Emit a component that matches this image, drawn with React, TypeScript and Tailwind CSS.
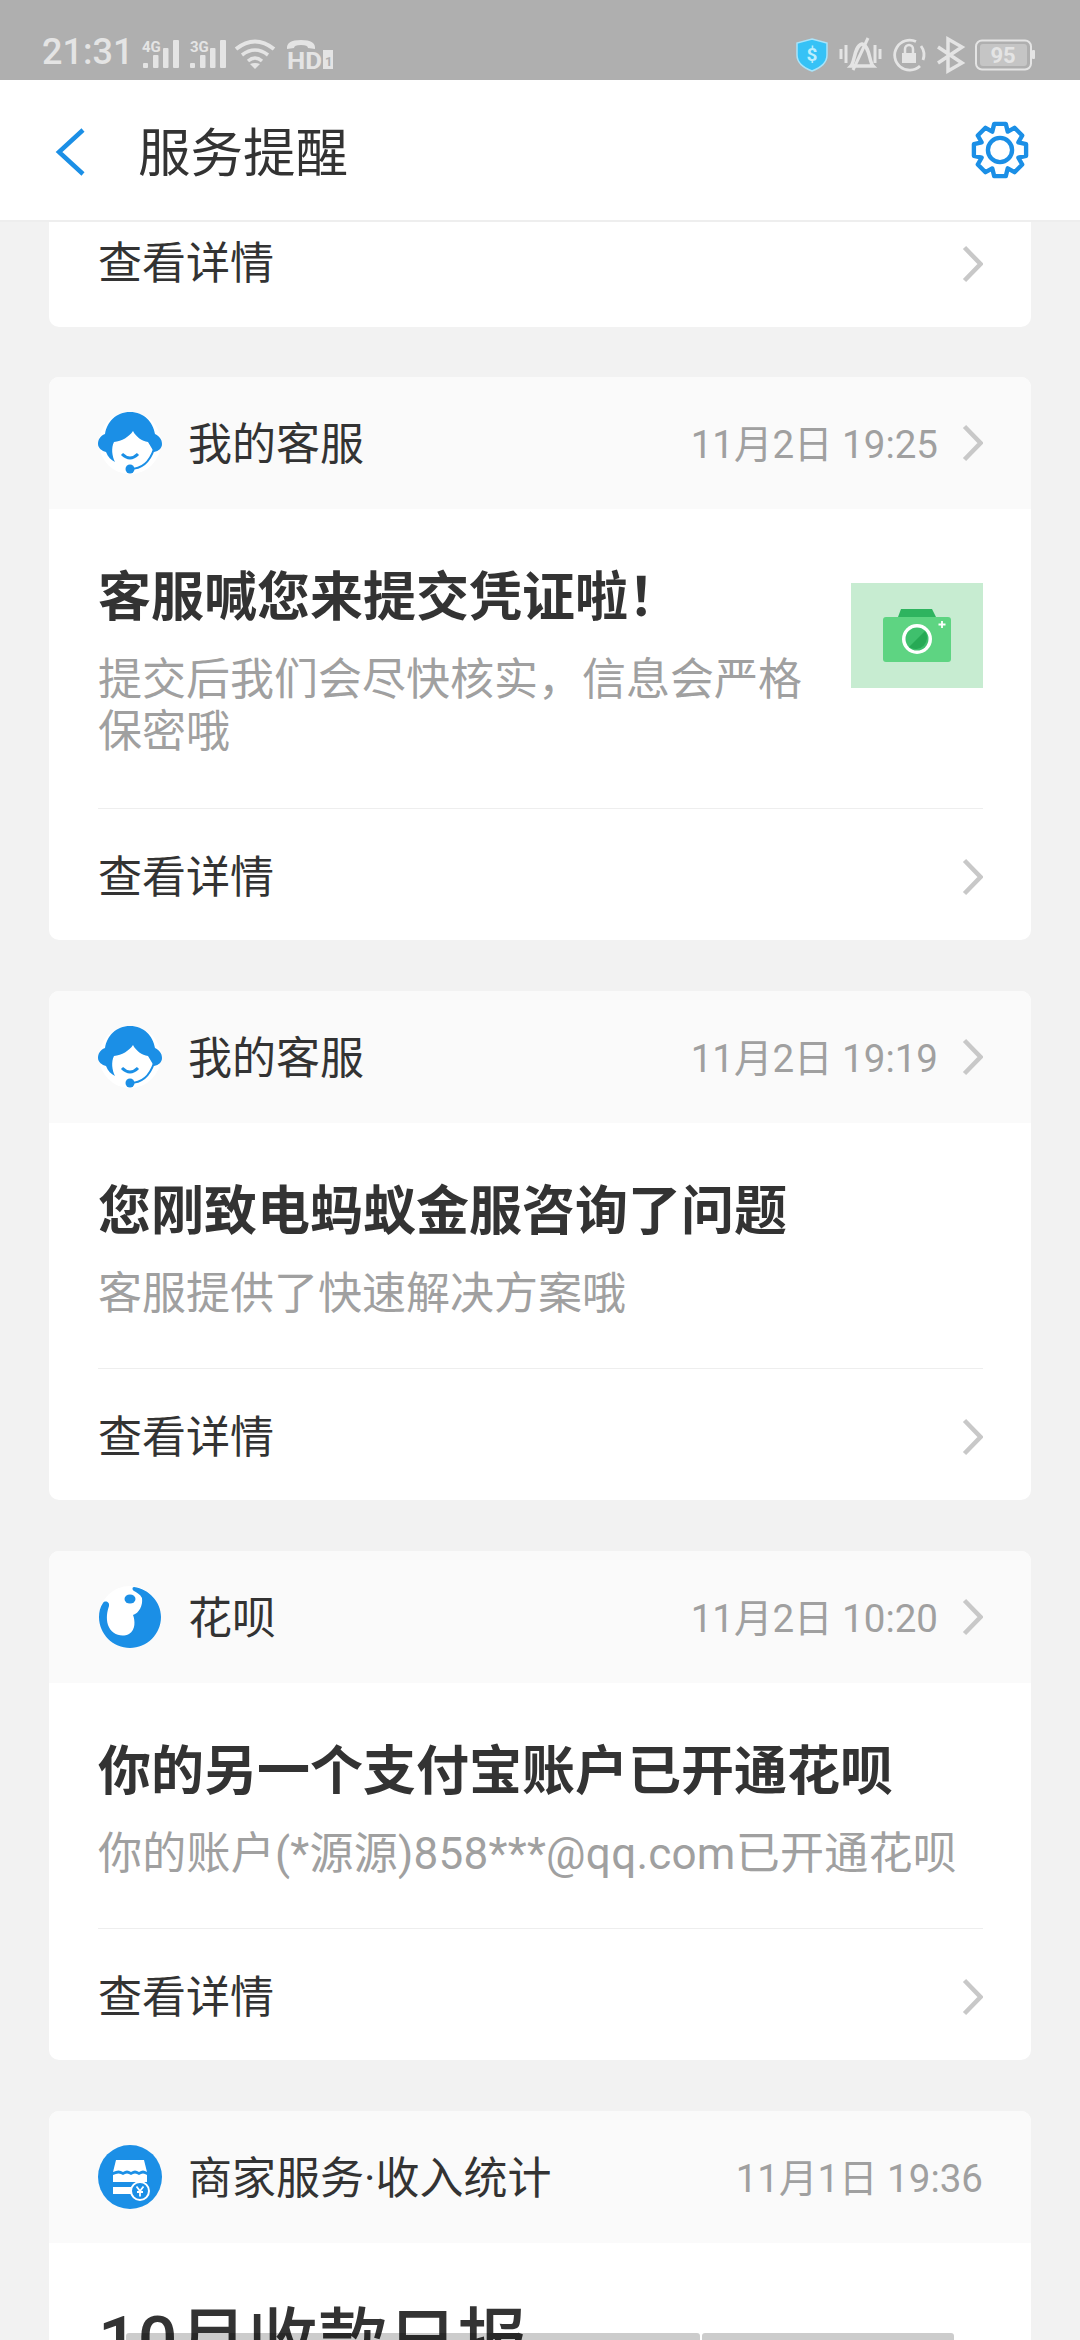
import React from 'react';

const FONT = "font-[Roboto,'Noto_Sans_CJK_SC',sans-serif]";

function Chevron() {
  return (
    <svg width="22" height="38" viewBox="0 0 22 38" fill="none" className="shrink-0">
      <path d="M3.500 2.500L19.500 19L3.500 35.500" stroke="#c8c8c8" strokeWidth="4.500" />
    </svg>
  );
}

function AgentIcon() {
  return (
    <svg width="64" height="64" viewBox="0 0 64 64" className="shrink-0">
      <circle cx="32" cy="32" r="31" fill="#fff" />
      <path
        d="M32 1C18 1 9 11 7 23C2 25 0 29 0 33C0 37 4 40 8 41C10 46 13 49 17 51C14 45 13 37 16 31C24 30 31 26 35 20C38 26 44 30 50 31L56 41C61 40 64 37 64 33C64 28 61 25 57 23C55 11 46 1 32 1Z"
        fill="#1b8fe6"
      />
      <path d="M24 43Q32 51 40 43" stroke="#1b8fe6" strokeWidth="3" fill="none" />
      <path d="M32 58C44 58 52 50 56 38" stroke="#1b8fe6" strokeWidth="2" fill="none" />
      <circle cx="32" cy="58" r="4.500" fill="#1b8fe6" />
    </svg>
  );
}

function HuabeiIcon() {
  return (
    <svg width="64" height="64" viewBox="0 0 64 64" className="shrink-0">
      <circle cx="32" cy="32" r="31" fill="#fff" />
      <path
        d="M36 2C51 4 63 17 63 32C63 49 49 63 32 63C15 63 1 49 1 32C1 27 2 22 5 18C7 15 12 17 11 21C9 27 8 33 10 40C13 49 23 53 31 49C38 45 37 35 35 30C41 28 45 21 44 13C42 9 38 7 36 6C34 5 34 2 36 2Z"
        fill="#1b8fe6"
      />
      <ellipse cx="32" cy="14" rx="5.500" ry="4.500" fill="#1b8fe6" />
    </svg>
  );
}

function StoreIcon() {
  return (
    <svg width="64" height="64" viewBox="0 0 64 64" className="shrink-0">
      <circle cx="32" cy="32" r="32" fill="#1b8fe6" />
      <path d="M18 15H46L49 27Q45 24 41 27Q37 24 33 27Q29 24 25 27Q21 24 15 27Z" fill="#fff" />
      <path d="M15 30Q21 27 25 30Q29 27 33 30Q37 27 41 30Q45 27 49 30V37H15Z" fill="#fff" />
      <rect x="15" y="42" width="19" height="7" fill="#fff" />
      <circle cx="42" cy="46" r="9" fill="#1b8fe6" stroke="#fff" strokeWidth="2" />
      <path d="M38.500 41.500L42 46L45.500 41.500M42 46V51.500M39 47H45" stroke="#fff" strokeWidth="1.800" fill="none" />
    </svg>
  );
}

function CameraThumb() {
  return (
    <div className="flex h-[105px] w-[132px] shrink-0 items-center justify-center bg-[#c7ecd1]">
      <svg width="68" height="56" viewBox="0 0 68 56">
        <path d="M15 9L18 1H49L53 9Z" fill="#2eb45f" />
        <rect x="0" y="9" width="68" height="45" rx="3" fill="#5ed482" />
        <circle cx="34" cy="31" r="15" fill="#fff" />
        <circle cx="34" cy="31" r="11.500" fill="#3fc06d" />
        <path d="M26 39L42 23A11.500 11.500 0 0 1 26 39Z" fill="#27a955" />
        <path d="M59 13v7M55.500 16.500h7" stroke="#fff" strokeWidth="1.800" />
      </svg>
    </div>
  );
}

function DetailRow() {
  return (
    <div className="ml-[49px] mr-[48px] flex h-[132px] items-center justify-between border-t border-[#eeeeee] pt-[5px]">
      <span className="mt-[2px] text-[44px] leading-[52px] text-[#333333]">查看详情</span>
      <Chevron />
    </div>
  );
}

interface NoticeCardProps {
  icon: React.ReactNode;
  source: string;
  time: string;
  title: string;
  desc?: React.ReactNode[];
  thumb?: React.ReactNode;
  noArrow?: boolean;
  footer?: boolean;
  titleClass?: string;
}

function NoticeCard({
  icon,
  source,
  time,
  title,
  desc = [],
  thumb,
  noArrow,
  footer = true,
  titleClass = 'text-[53px] font-bold leading-[60px]',
}: NoticeCardProps) {
  return (
    <div className="mb-[51px] shrink-0 overflow-hidden rounded-[10px] bg-white">
      <div className="flex h-[132px] items-center bg-[#fafafa] pl-[49px] pr-[48px]">
        {icon}
        <span className="ml-[26px] mt-[3px] flex-1 text-[44px] leading-[52px] text-[#333333]">{source}</span>
        <span className="mt-[3px] text-[38.5px] text-[#a0a0a0]">{time}</span>
        {!noArrow && (
          <span className="ml-[23px] flex">
            <Chevron />
          </span>
        )}
      </div>
      <div className={`flex items-start justify-between pl-[49px] pr-[48px] pt-[59px] ${thumb ? 'pb-[50px]' : 'pb-[48px]'}`}>
        <div className="min-w-0 flex-1">
          <div className={`${titleClass} text-[#333333]`}>{title}</div>
          {desc.map((line, i) => (
            <div key={i} className={`text-[44px] leading-[52px] text-[#a0a0a0] ${i === 0 ? 'mt-[26px]' : ''}`}>
              {line}
            </div>
          ))}
        </div>
        {thumb && <div className="mt-[15px]">{thumb}</div>}
      </div>
      {footer && <DetailRow />}
    </div>
  );
}

function StatusBar() {
  return (
    <div className="flex h-[80px] shrink-0 items-end justify-between bg-[#afafaf] pb-[9px] pl-[42px] pr-[44px] text-[#e4e4e4]">
      <div className="flex items-end">
        <span className="text-[36px] font-medium leading-[38px]">21:31</span>
        <svg width="192" height="32" viewBox="0 0 192 32" className="ml-[9px] overflow-visible" fill="#e4e4e4">
          <text x="0" y="13" fontSize="15" fontWeight="700" fontFamily="Roboto">4G</text>
          <rect x="1" y="24" width="5" height="5" rx="1" />
          <rect x="11" y="16" width="5.500" height="13" rx="1" />
          <rect x="21" y="9" width="5.500" height="20" rx="1" />
          <rect x="31" y="1" width="6" height="28" rx="1" />
          <text x="48" y="13" fontSize="15" fontWeight="700" fontFamily="Roboto">3G</text>
          <rect x="48" y="24" width="5" height="5" rx="1" />
          <rect x="58" y="16" width="5.500" height="13" rx="1" />
          <rect x="68" y="9" width="5.500" height="20" rx="1" />
          <rect x="78" y="1" width="6" height="28" rx="1" />
          <path d="M94 10Q113-5 132 10" stroke="#e4e4e4" strokeWidth="4" fill="none" />
          <path d="M100 16Q113 6 126 16" stroke="#e4e4e4" strokeWidth="3.500" fill="none" />
          <path d="M106 22Q113 16 120 22" stroke="#e4e4e4" strokeWidth="3.500" fill="none" />
          <path d="M108 25L113 30L118 25Q113 23 108 25Z" />
          <path d="M145 10Q144 1 159 1Q174 1 173 10L166 9Q166 6 159 6Q152 6 152 9Z" />
          <text x="145" y="30" fontSize="24" fontWeight="700" fontFamily="Roboto" textLength="35" lengthAdjust="spacingAndGlyphs">HD</text>
          <rect x="181" y="11" width="10" height="19" />
          <text x="183" y="27" fontSize="13" fontWeight="700" fontFamily="Roboto" fill="#afafaf">1</text>
        </svg>
      </div>
      <svg width="240" height="33" viewBox="0 0 240 33" fill="none" className="overflow-visible">
        <path d="M16 1L31 5V17C31 25 24 30 16 33C8 30 1 25 1 17V5Z" fill="#36c2f6" stroke="#a9e4fa" strokeWidth="1.500" />
        <text x="16" y="23" textAnchor="middle" fontSize="19" fontWeight="700" fontFamily="Roboto" fill="#bdeefd">$</text>
        <path d="M45 11v10M50 7v18M79 7v18M84 11v10" stroke="#e4e4e4" strokeWidth="3" />
        <path d="M55 28C59 24 58 8 66 6C74 8 73 24 77 28Z" stroke="#e4e4e4" strokeWidth="3.500" />
        <path d="M57 32L72 0" stroke="#e4e4e4" strokeWidth="3" />
        <path d="M120 3.500A15 15 0 1 0 124 28" stroke="#e4e4e4" strokeWidth="2.800" />
        <path d="M125 8A15 15 0 0 1 127 22" stroke="#e4e4e4" strokeWidth="2.800" />
        <rect x="106" y="15" width="14" height="10" fill="#e4e4e4" />
        <path d="M109 15V11A4 4 0 0 1 117 11V15" stroke="#e4e4e4" strokeWidth="2.500" />
        <path d="M142 9L166 25L152 33V1L166 9L142 25" stroke="#e4e4e4" strokeWidth="3.500" />
        <rect x="180" y="2.500" width="55" height="29" rx="6" stroke="#e4e4e4" strokeWidth="2" />
        <rect x="184" y="6" width="47" height="22" rx="3" fill="#c5c5c5" />
        <rect x="236" y="12" width="3" height="9" rx="1" fill="#e4e4e4" />
        <text x="207" y="25" textAnchor="middle" fontSize="22" fontWeight="700" fontFamily="Roboto" fill="#e4e4e4">95</text>
      </svg>
    </div>
  );
}

export default function App() {
  return (
    <div className={`relative flex h-[2340px] w-[1080px] flex-col overflow-hidden bg-[#f2f2f2] ${FONT}`}>
      <StatusBar />
      <div className="flex h-[142px] shrink-0 items-center justify-between border-b-2 border-[#eeeeee] bg-white pl-[55px] pr-[51px]">
        <div className="flex items-center">
          <svg width="30" height="48" viewBox="0 0 30 48" fill="none" className="mt-[3px]">
            <path d="M28 2L4 24L28 46" stroke="#1b8fe6" strokeWidth="4.500" />
          </svg>
          <span className="ml-[53px] mt-[8px] text-[52.5px] leading-[60px] text-[#333333]">服务提醒</span>
        </div>
        <svg width="58" height="58" viewBox="0 0 60 60" fill="none" stroke="#1b8fe6" strokeWidth="4.500" strokeLinejoin="round">
          <path d="M24 3H36L38 11L45 7L53 15L49 22L57 24V36L49 38L53 45L45 53L38 49L36 57H24L22 49L15 53L7 45L11 38L3 36V24L11 22L7 15L15 7L22 11Z" />
          <circle cx="30" cy="30" r="12.500" />
        </svg>
      </div>
      <div className="flex min-h-0 flex-1 flex-col px-[49px]">
        <div className="mb-[50px] shrink-0 rounded-b-[10px] bg-white">
          <div className="ml-[49px] mr-[48px] flex h-[105px] items-center justify-between pb-[24px] pt-[2px]">
            <span className="text-[44px] leading-[52px] text-[#333333]">查看详情</span>
            <Chevron />
          </div>
        </div>
        <NoticeCard
          icon={<AgentIcon />}
          source="我的客服"
          time="11月2日 19:25"
          title="客服喊您来提交凭证啦！"
          desc={['提交后我们会尽快核实，信息会严格', '保密哦']}
          thumb={<CameraThumb />}
        />
        <NoticeCard
          icon={<AgentIcon />}
          source="我的客服"
          time="11月2日 19:19"
          title="您刚致电蚂蚁金服咨询了问题"
          desc={['客服提供了快速解决方案哦']}
        />
        <NoticeCard
          icon={<HuabeiIcon />}
          source="花呗"
          time="11月2日 10:20"
          title="你的另一个支付宝账户已开通花呗"
          desc={[<span className="tracking-[0.25px]">你的账户(*源源)858***@qq.com已开通花呗</span>]}
        />
        <NoticeCard
          icon={<StoreIcon />}
          source="商家服务·收入统计"
          time="11月1日 19:36"
          title="10月收款日报"
          titleClass="text-[70px] font-medium leading-[80px]"
          noArrow
          footer={false}
        />
      </div>
      {/* see-through grey strips that sit over the last card at the very bottom */}
      <div className="absolute bottom-0 left-[126px] flex h-[7px] gap-[2px]">
        <div className="w-[574px] rounded-t-[3px] bg-black/20" />
        <div className="w-[252px] rounded-t-[3px] bg-black/20" />
      </div>
    </div>
  );
}
